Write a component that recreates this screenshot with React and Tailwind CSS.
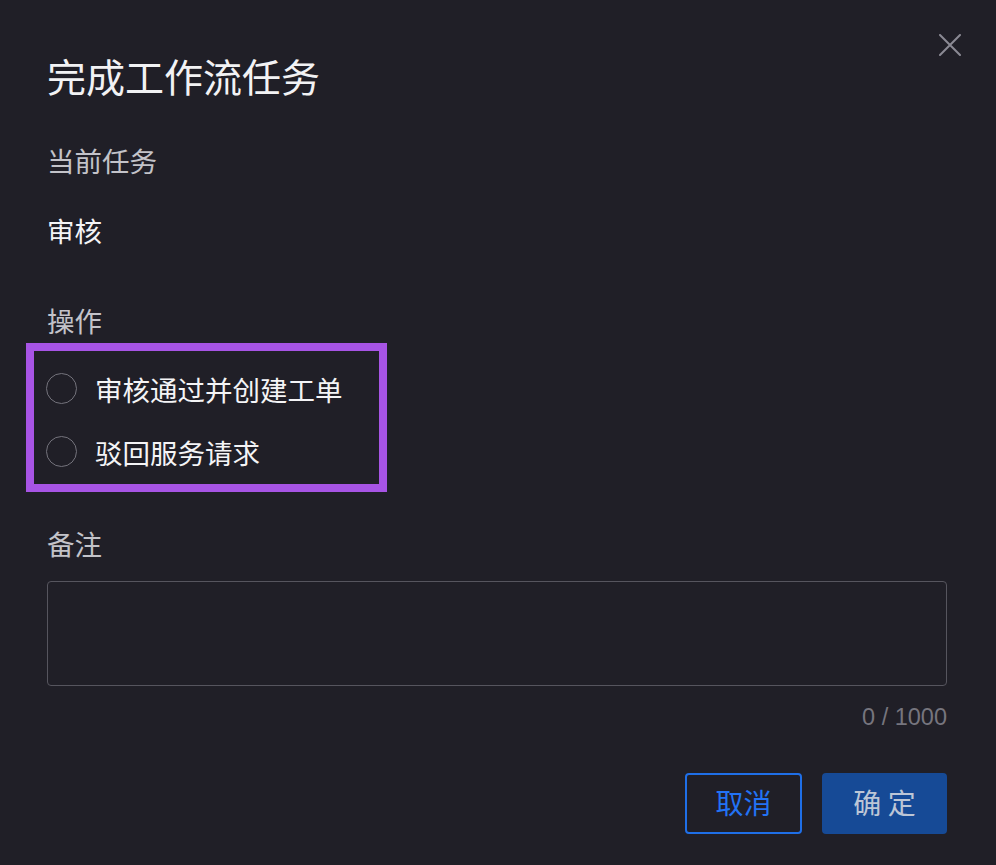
import React, { useState } from 'react';

const options = [
  { value: 'approve', label: '审核通过并创建工单' },
  { value: 'reject', label: '驳回服务请求' },
];

const CloseIcon = () => (
  <svg width="22" height="22" viewBox="0 0 22 22" fill="none">
    <path d="M1 1L21 21M21 1L1 21" stroke="#8b8a94" strokeWidth="2" strokeLinecap="round" />
  </svg>
);

const App = () => {
  const [choice, setChoice] = useState('');
  const [note, setNote] = useState('');

  return (
    <div
      className="relative w-[996px] h-[865px] bg-[#201f27] pl-[47px] pr-[49px] pt-[56px]"
      style={{ fontFamily: '"Noto Sans CJK SC", "Noto Sans", sans-serif' }}
    >
      {/* Close */}
      <button className="absolute left-[939px] top-[34px] w-[22px] h-[22px] flex items-center justify-center">
        <CloseIcon />
      </button>

      {/* Header */}
      <h1 className="h-[38px] leading-[38px] text-[39px] font-normal text-[#f2f2f4]">完成工作流任务</h1>

      {/* Current task */}
      <div className="mt-[52px] h-[28px] leading-[28px] text-[27.5px] text-[#c3c3c9]">当前任务</div>
      <div className="mt-[42px] h-[28px] leading-[28px] text-[27.5px] text-[#f4f4f6]">审核</div>

      {/* Operation */}
      <div className="mt-[62px] h-[28px] leading-[28px] text-[27.5px] text-[#c3c3c9]">操作</div>
      <div className="mt-[9px] ml-[-21px] w-[361px] h-[149px] border-[8px] border-[#a754e5] pt-[6px] pl-[12px]">
        {options.map((opt) => (
          <label key={opt.value} className="flex items-center h-[63px] cursor-pointer" onClick={() => setChoice(opt.value)}>
            <span className="w-[31px] h-[31px] rounded-full border-[1.5px] border-[#74737c] flex items-center justify-center">
              {choice === opt.value && <span className="w-[15px] h-[15px] rounded-full bg-[#2273f5]" />}
            </span>
            <span className="ml-[18px] text-[27.5px] leading-[28px] text-[#f4f4f6]">{opt.label}</span>
          </label>
        ))}
      </div>

      {/* Remark */}
      <div className="mt-[37px] h-[28px] leading-[28px] text-[27.5px] text-[#c3c3c9]">备注</div>
      <textarea
        value={note}
        onChange={(e) => setNote(e.target.value.slice(0, 1000))}
        className="mt-[24px] block w-[900px] h-[105px] resize-none rounded-[4px] border-[1.5px] border-[#56555e] bg-transparent text-[#f4f4f6] text-[24px] px-3 py-2 outline-none"
      />
      <div
        className="mt-[19px] w-[900px] h-[24px] leading-[24px] text-right text-[23.5px] text-[#76757e]"
        style={{ fontFamily: '"Liberation Sans", Arial, sans-serif' }}
      >
        {note.length} / 1000
      </div>

      {/* Footer */}
      <div className="mt-[44px] w-[900px] flex justify-end gap-[20px]">
        <button className="w-[117px] h-[61px] pb-[3px] rounded-[4px] border-[2px] border-[#1f6fe8] text-[28px] text-[#2273f5]">取消</button>
        <button className="w-[125px] h-[61px] pb-[3px] rounded-[4px] bg-[#164a96] text-[28px] text-[#bcc6d6]">确 定</button>
      </div>
    </div>
  );
};

export default App;
